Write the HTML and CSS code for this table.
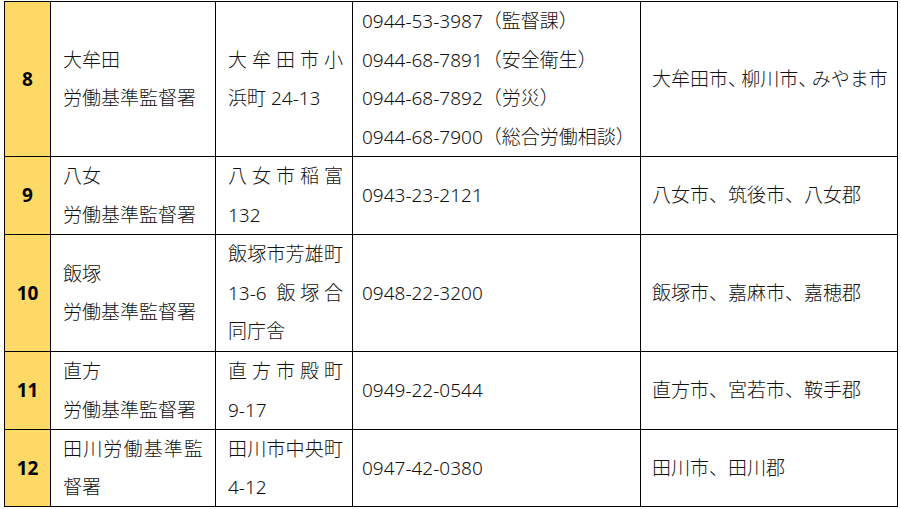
FILE: index.html
```html
<!DOCTYPE html>
<html lang="ja">
<head>
<meta charset="utf-8">
<title>労働基準監督署一覧</title>
<link rel="stylesheet" href="styles.css">
</head>
<body>
<div class="sheet">
  <div class="cell num">8</div>
  <div class="cell name"><span>大牟田<br>労働基準監督署</span></div>
  <div class="cell addr"><span class="ln">大牟田市小</span><span>浜町 24-13</span></div>
  <div class="cell tel">
    <span>0944-53-3987（監督課）</span>
    <span>0944-68-7891（安全衛生）</span>
    <span>0944-68-7892（労災）</span>
    <span>0944-68-7900（総合労働相談）</span>
  </div>
  <div class="cell area"><span>大牟田市<span class="cmp">、</span>柳川市<span class="cmp">、</span>みやま市</span></div>

  <div class="cell num">9</div>
  <div class="cell name"><span>八女<br>労働基準監督署</span></div>
  <div class="cell addr"><span>八女市稲富132</span></div>
  <div class="cell tel"><span>0943-23-2121</span></div>
  <div class="cell area"><span>八女市、筑後市、八女郡</span></div>

  <div class="cell num">10</div>
  <div class="cell name"><span>飯塚<br>労働基準監督署</span></div>
  <div class="cell addr"><span>飯塚市芳雄町13-6 飯塚合同庁舎</span></div>
  <div class="cell tel"><span>0948-22-3200</span></div>
  <div class="cell area"><span>飯塚市、嘉麻市、嘉穂郡</span></div>

  <div class="cell num">11</div>
  <div class="cell name"><span>直方<br>労働基準監督署</span></div>
  <div class="cell addr"><span>直方市殿町9&#8209;17</span></div>
  <div class="cell tel"><span>0949-22-0544</span></div>
  <div class="cell area"><span>直方市、宮若市、鞍手郡</span></div>

  <div class="cell num">12</div>
  <div class="cell name"><span>田川労働基準監督署</span></div>
  <div class="cell addr"><span>田川市中央町4-12</span></div>
  <div class="cell tel"><span>0947-42-0380</span></div>
  <div class="cell area"><span>田川市、田川郡</span></div>
</div>
</body>
</html>
```
FILE: styles.css
```css
html, body {
  margin: 0;
  padding: 0;
  background: #ffffff;
}

body {
  font-family: "Noto Sans", "Noto Sans CJK JP", sans-serif;
  font-size: 19px;
  font-weight: 300;
  color: #111111;
}

.sheet {
  display: grid;
  grid-template-columns: 45px 164px 136px 287px 256px;
  grid-template-rows: 154px 77px 116px 77px 76px;
  gap: 1px;
  padding: 1px;
  background: #000000;
  width: max-content;
  margin: 1px 0 0 4px;
}

.cell {
  background: #ffffff;
  display: flex;
  flex-direction: column;
  justify-content: center;
  line-height: 38.5px;
  min-width: 0;
}

.cell > span {
  display: block;
}

.num {
  background: #ffd966;
  align-items: center;
  font-weight: 700;
  color: #000000;
}

.name {
  padding: 0 12px 0 12px;
  text-align: justify;
}

.addr {
  padding: 0 9px 0 12px;
  text-align: justify;
}

.addr .ln {
  text-align-last: justify;
}

.tel {
  padding: 0 8px 0 9px;
  white-space: nowrap;
}

.area {
  padding: 0 8px 0 11px;
  white-space: nowrap;
}

.cmp {
  letter-spacing: -0.3em;
}
```
